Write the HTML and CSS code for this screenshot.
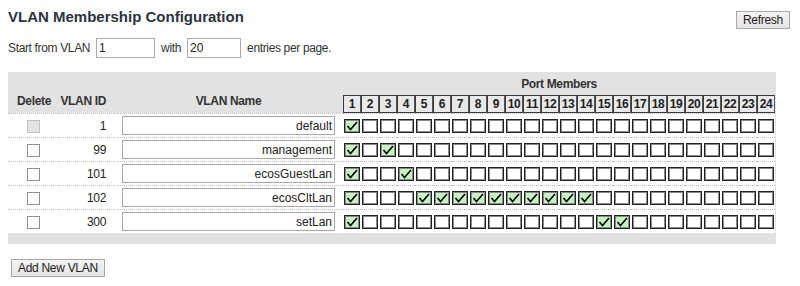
FILE: index.html
```html
<!DOCTYPE html>
<html>
<head>
<meta charset="utf-8">
<title>VLAN Membership Configuration</title>
<link rel="stylesheet" href="styles.css">
</head>
<body>
<div class="topbar">
  <h1 class="title">VLAN Membership Configuration</h1>
  <div class="actions">
    <button class="btn">Refresh</button>
    <button class="btn edge" aria-label="First page"></button>
  </div>
</div>
<div class="paging">
  <span>Start from VLAN</span>
  <input class="field f1" value="1">
  <span>with</span>
  <input class="field f2" value="20">
  <span>entries per page.</span>
</div>

<div class="tablewrap">
<table class="vlan">
  <colgroup>
    <col class="c-del"><col class="c-id"><col class="c-name">
    <col class="c-p"><col class="c-p"><col class="c-p"><col class="c-p"><col class="c-p"><col class="c-p">
    <col class="c-p"><col class="c-p"><col class="c-p"><col class="c-p"><col class="c-p"><col class="c-p">
    <col class="c-p"><col class="c-p"><col class="c-p"><col class="c-p"><col class="c-p"><col class="c-p">
    <col class="c-p"><col class="c-p"><col class="c-p"><col class="c-p"><col class="c-p"><col class="c-p">
  </colgroup>
  <thead>
    <tr class="h1row">
      <th class="hl" rowspan="2">Delete</th>
      <th class="hl" rowspan="2">VLAN ID</th>
      <th class="hl" rowspan="2">VLAN Name</th>
      <th class="pm" colspan="24">Port Members</th>
    </tr>
    <tr class="h2row">
      <th class="pn">1</th><th class="pn">2</th><th class="pn">3</th><th class="pn">4</th><th class="pn">5</th><th class="pn">6</th>
      <th class="pn">7</th><th class="pn">8</th><th class="pn">9</th><th class="pn">10</th><th class="pn">11</th><th class="pn">12</th>
      <th class="pn">13</th><th class="pn">14</th><th class="pn">15</th><th class="pn">16</th><th class="pn">17</th><th class="pn">18</th>
      <th class="pn">19</th><th class="pn">20</th><th class="pn">21</th><th class="pn">22</th><th class="pn">23</th><th class="pn">24</th>
    </tr>
  </thead>
  <tbody>
    <tr>
      <td class="del"><span class="cb dis"></span></td>
      <td class="id">1</td>
      <td class="name"><input class="nm" value="default"></td>
      <td><span class="pb on"><svg viewBox="0 0 12 10"><path d="M1.5 5 L4.5 8.5 L11 1"/></svg></span></td>
      <td><span class="pb"></span></td><td><span class="pb"></span></td><td><span class="pb"></span></td><td><span class="pb"></span></td><td><span class="pb"></span></td>
      <td><span class="pb"></span></td><td><span class="pb"></span></td><td><span class="pb"></span></td><td><span class="pb"></span></td><td><span class="pb"></span></td><td><span class="pb"></span></td>
      <td><span class="pb"></span></td><td><span class="pb"></span></td><td><span class="pb"></span></td><td><span class="pb"></span></td><td><span class="pb"></span></td><td><span class="pb"></span></td>
      <td><span class="pb"></span></td><td><span class="pb"></span></td><td><span class="pb"></span></td><td><span class="pb"></span></td><td><span class="pb"></span></td><td><span class="pb"></span></td>
    </tr>
    <tr>
      <td class="del"><span class="cb"></span></td>
      <td class="id">99</td>
      <td class="name"><input class="nm" value="management"></td>
      <td><span class="pb on"><svg viewBox="0 0 12 10"><path d="M1.5 5 L4.5 8.5 L11 1"/></svg></span></td>
      <td><span class="pb"></span></td>
      <td><span class="pb on"><svg viewBox="0 0 12 10"><path d="M1.5 5 L4.5 8.5 L11 1"/></svg></span></td>
      <td><span class="pb"></span></td><td><span class="pb"></span></td><td><span class="pb"></span></td>
      <td><span class="pb"></span></td><td><span class="pb"></span></td><td><span class="pb"></span></td><td><span class="pb"></span></td><td><span class="pb"></span></td><td><span class="pb"></span></td>
      <td><span class="pb"></span></td><td><span class="pb"></span></td><td><span class="pb"></span></td><td><span class="pb"></span></td><td><span class="pb"></span></td><td><span class="pb"></span></td>
      <td><span class="pb"></span></td><td><span class="pb"></span></td><td><span class="pb"></span></td><td><span class="pb"></span></td><td><span class="pb"></span></td><td><span class="pb"></span></td>
    </tr>
    <tr>
      <td class="del"><span class="cb"></span></td>
      <td class="id">101</td>
      <td class="name"><input class="nm" value="ecosGuestLan"></td>
      <td><span class="pb on"><svg viewBox="0 0 12 10"><path d="M1.5 5 L4.5 8.5 L11 1"/></svg></span></td>
      <td><span class="pb"></span></td><td><span class="pb"></span></td>
      <td><span class="pb on"><svg viewBox="0 0 12 10"><path d="M1.5 5 L4.5 8.5 L11 1"/></svg></span></td>
      <td><span class="pb"></span></td><td><span class="pb"></span></td>
      <td><span class="pb"></span></td><td><span class="pb"></span></td><td><span class="pb"></span></td><td><span class="pb"></span></td><td><span class="pb"></span></td><td><span class="pb"></span></td>
      <td><span class="pb"></span></td><td><span class="pb"></span></td><td><span class="pb"></span></td><td><span class="pb"></span></td><td><span class="pb"></span></td><td><span class="pb"></span></td>
      <td><span class="pb"></span></td><td><span class="pb"></span></td><td><span class="pb"></span></td><td><span class="pb"></span></td><td><span class="pb"></span></td><td><span class="pb"></span></td>
    </tr>
    <tr>
      <td class="del"><span class="cb"></span></td>
      <td class="id">102</td>
      <td class="name"><input class="nm" value="ecosCltLan"></td>
      <td><span class="pb on"><svg viewBox="0 0 12 10"><path d="M1.5 5 L4.5 8.5 L11 1"/></svg></span></td>
      <td><span class="pb"></span></td><td><span class="pb"></span></td><td><span class="pb"></span></td>
      <td><span class="pb on"><svg viewBox="0 0 12 10"><path d="M1.5 5 L4.5 8.5 L11 1"/></svg></span></td>
      <td><span class="pb on"><svg viewBox="0 0 12 10"><path d="M1.5 5 L4.5 8.5 L11 1"/></svg></span></td>
      <td><span class="pb on"><svg viewBox="0 0 12 10"><path d="M1.5 5 L4.5 8.5 L11 1"/></svg></span></td>
      <td><span class="pb on"><svg viewBox="0 0 12 10"><path d="M1.5 5 L4.5 8.5 L11 1"/></svg></span></td>
      <td><span class="pb on"><svg viewBox="0 0 12 10"><path d="M1.5 5 L4.5 8.5 L11 1"/></svg></span></td>
      <td><span class="pb on"><svg viewBox="0 0 12 10"><path d="M1.5 5 L4.5 8.5 L11 1"/></svg></span></td>
      <td><span class="pb on"><svg viewBox="0 0 12 10"><path d="M1.5 5 L4.5 8.5 L11 1"/></svg></span></td>
      <td><span class="pb on"><svg viewBox="0 0 12 10"><path d="M1.5 5 L4.5 8.5 L11 1"/></svg></span></td>
      <td><span class="pb on"><svg viewBox="0 0 12 10"><path d="M1.5 5 L4.5 8.5 L11 1"/></svg></span></td>
      <td><span class="pb on"><svg viewBox="0 0 12 10"><path d="M1.5 5 L4.5 8.5 L11 1"/></svg></span></td>
      <td><span class="pb"></span></td><td><span class="pb"></span></td><td><span class="pb"></span></td><td><span class="pb"></span></td><td><span class="pb"></span></td>
      <td><span class="pb"></span></td><td><span class="pb"></span></td><td><span class="pb"></span></td><td><span class="pb"></span></td><td><span class="pb"></span></td>
    </tr>
    <tr>
      <td class="del"><span class="cb"></span></td>
      <td class="id">300</td>
      <td class="name"><input class="nm" value="setLan"></td>
      <td><span class="pb on"><svg viewBox="0 0 12 10"><path d="M1.5 5 L4.5 8.5 L11 1"/></svg></span></td>
      <td><span class="pb"></span></td><td><span class="pb"></span></td><td><span class="pb"></span></td><td><span class="pb"></span></td><td><span class="pb"></span></td>
      <td><span class="pb"></span></td><td><span class="pb"></span></td><td><span class="pb"></span></td><td><span class="pb"></span></td><td><span class="pb"></span></td><td><span class="pb"></span></td>
      <td><span class="pb"></span></td><td><span class="pb"></span></td>
      <td><span class="pb on"><svg viewBox="0 0 12 10"><path d="M1.5 5 L4.5 8.5 L11 1"/></svg></span></td>
      <td><span class="pb on"><svg viewBox="0 0 12 10"><path d="M1.5 5 L4.5 8.5 L11 1"/></svg></span></td>
      <td><span class="pb"></span></td><td><span class="pb"></span></td><td><span class="pb"></span></td><td><span class="pb"></span></td>
      <td><span class="pb"></span></td><td><span class="pb"></span></td><td><span class="pb"></span></td><td><span class="pb"></span></td>
    </tr>
  </tbody>
  <tfoot>
    <tr class="foot"><td colspan="27"></td></tr>
  </tfoot>
</table>
</div>

<div class="bottom">
  <button class="btn add">Add New VLAN</button>
</div>
</body>
</html>
```

FILE: styles.css
```css
html, body {
  overflow: hidden;
}
body {
  margin: 8px;
  font-family: "Liberation Sans", Arial, sans-serif;
  font-size: 12px;
  letter-spacing: -0.35px;
  color: #333;
  background: #fff;
}
.topbar {
  display: flex;
  align-items: flex-start;
  height: 30px;
}
.title {
  margin: 0;
  font-size: 15px;
  line-height: 17px;
  font-weight: bold;
  letter-spacing: 0;
  color: #2b3440;
}
.actions {
  margin-left: auto;
  width: 56px;
  display: flex;
  gap: 9px;
  padding-top: 3px;
  white-space: nowrap;
}
.btn {
  flex: none;
  font-family: "Liberation Sans", Arial, sans-serif;
  font-size: 12px;
  letter-spacing: -0.3px;
  color: #222;
  height: 18px;
  padding: 0 6px;
  background: linear-gradient(#f4f4f4, #e4e4e4);
  border: 1px solid #a8a8a8;
  border-radius: 0;
  line-height: 16px;
}
.btn.edge {
  width: 30px;
}
.paging {
  display: flex;
  align-items: center;
  height: 20px;
}
.paging span { margin-right: 6px; }
.field {
  box-sizing: border-box;
  height: 20px;
  border: 1px solid #aaa;
  font-family: "Liberation Sans", Arial, sans-serif;
  font-size: 12px;
  color: #222;
  padding: 0 2px;
  margin: 0 6px 0 0;
}
.f1 { width: 59px; }
.f2 { width: 54px; }

.tablewrap {
  margin-top: 14px;
  width: 768px;
  background: #e2e2e2;
}
.vlan {
  table-layout: fixed;
  border-collapse: separate;
  border-spacing: 0;
  width: 767px;
}
.c-del { width: 50px; }
.c-id { width: 56px; }
.c-name { width: 229px; }
.c-p { width: 18px; }

.h1row { height: 23px; }
.hl {
  vertical-align: bottom;
  padding: 0 0 5px;
  font-size: 12px;
  font-weight: bold;
  color: #333;
  line-height: 14px;
}
.hl:first-child { padding-left: 2px; }
.hl:nth-child(2) { text-align: right; padding-right: 8px; }
.pm {
  padding: 5px 0 0;
  font-weight: bold;
  font-size: 12px;
  line-height: 14px;
  color: #333;
  vertical-align: top;
  text-align: center;
}
.h2row { height: 18px; }
.pn {
  box-sizing: border-box;
  height: 18px;
  padding: 0;
  border: 1px solid #3a3a3a;
  border-right-color: #555;
  background: #e9e9e9;
  font-size: 12px;
  font-weight: bold;
  color: #222;
  text-align: center;
  line-height: 16px;
}

tbody tr { height: 24px; background: #fff; }
tbody td {
  padding: 0;
  border-top: 1px dotted #bdbdbd;
  vertical-align: middle;
}
.del { text-align: center; }
.cb {
  display: inline-block;
  box-sizing: border-box;
  width: 13px;
  height: 13px;
  border: 1px solid #8f8f8f;
  background: #fff;
  vertical-align: middle;
}
.cb.dis {
  background: #e4e4e4;
  border-color: #c2c2c2;
}
.id {
  text-align: right;
  padding-right: 8px;
  color: #222;
}
.name { padding-left: 8px; }
.nm {
  box-sizing: border-box;
  display: block;
  width: 213px;
  height: 19px;
  margin: 0;
  border: 1px solid #a9a9a9;
  padding: 0 2px;
  text-align: right;
  font-family: "Liberation Sans", Arial, sans-serif;
  font-size: 12px;
  color: #222;
}
.pb {
  display: block;
  box-sizing: border-box;
  width: 16px;
  height: 14px;
  margin: 0 auto;
  border: 1px solid #222;
  box-shadow: 0 0 0 1px #8a8a8a inset;
  background: #fff;
}
.pb.on {
  background: #c6f3c2;
}
.pb svg {
  display: block;
  width: 12px;
  height: 10px;
  margin: 1px 0 0 1px;
  fill: none;
  stroke: #000;
  stroke-width: 1.6;
}
.foot { height: 11px; }
.foot td { padding: 0; }

.bottom {
  margin-top: 15px;
}
.add {
  margin-left: 3px;
}
```
